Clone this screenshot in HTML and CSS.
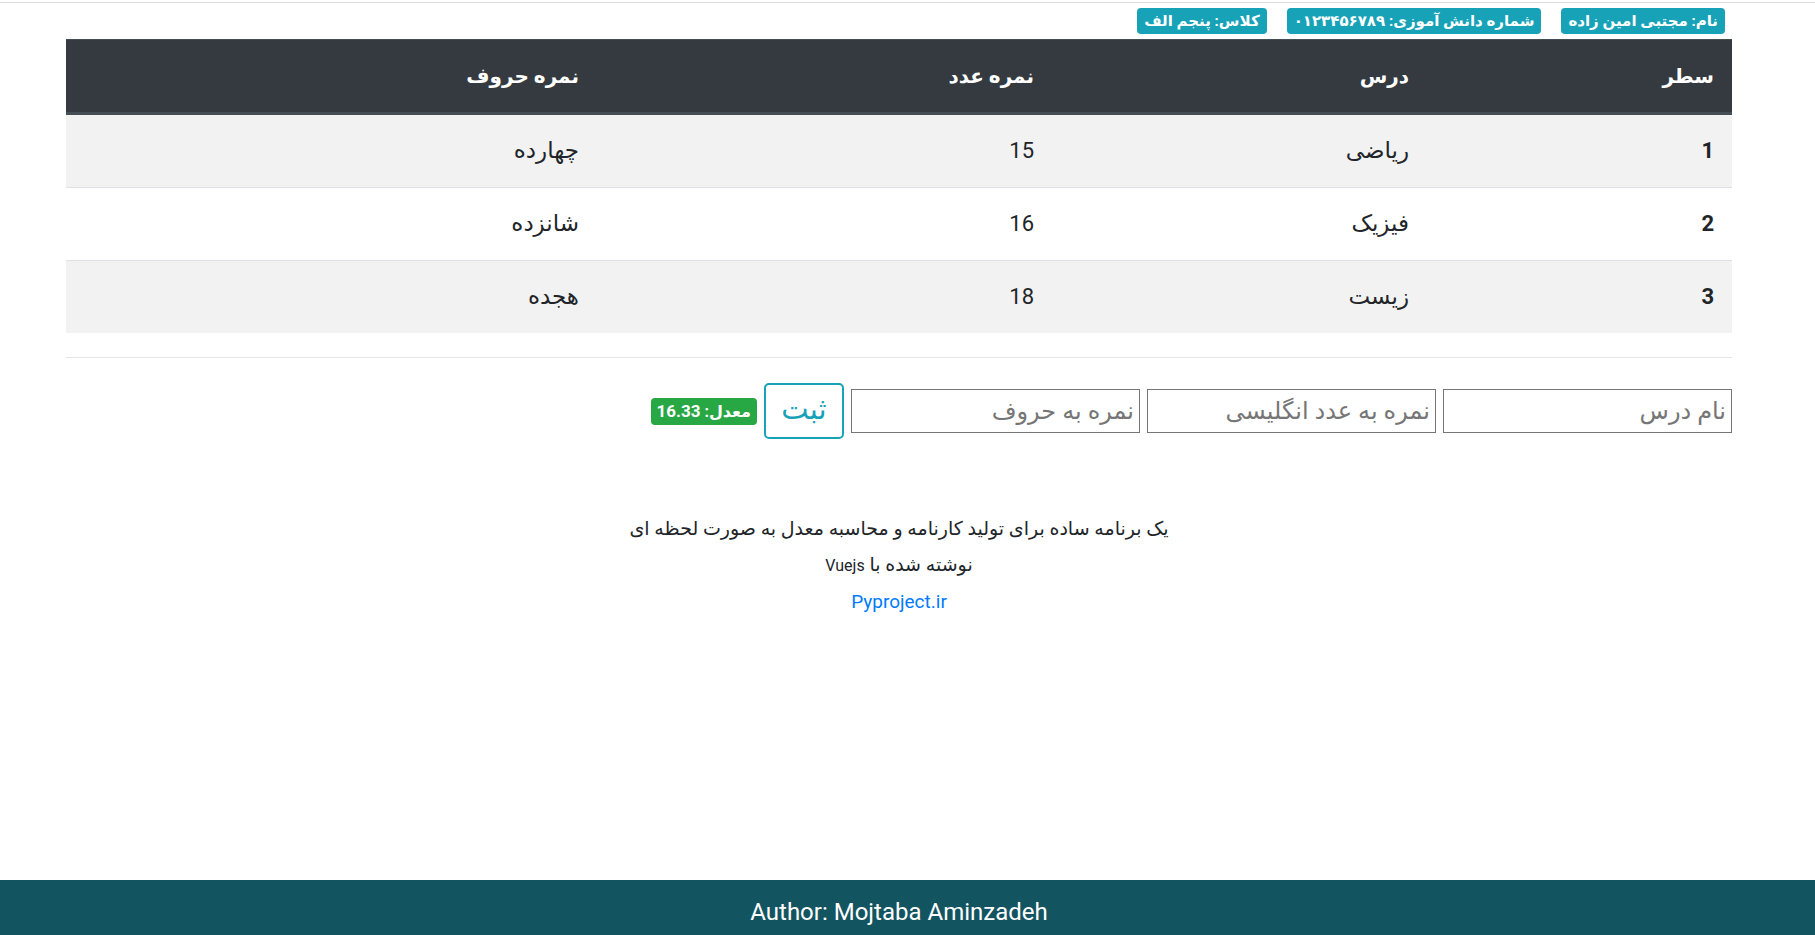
FILE: index.html
```html
<!DOCTYPE html>
<html lang="fa" dir="rtl">
<head>
<meta charset="utf-8">
<title>کارنامه</title>
<link rel="stylesheet" href="styles.css">
</head>
<body>
<div class="topline"></div>
<main class="wrap">
  <div class="info">
    <span class="badge badge-info">نام: مجتبی امین زاده</span>
    <span class="badge badge-info">شماره دانش آموزی: ۰۱۲۳۴۵۶۷۸۹</span>
    <span class="badge badge-info">کلاس: پنجم الف</span>
  </div>
  <table class="grades">
    <colgroup>
      <col class="col-row">
      <col class="col-lesson">
      <col class="col-num">
      <col class="col-letter">
    </colgroup>
    <thead>
      <tr><th>سطر</th><th>درس</th><th>نمره عدد</th><th>نمره حروف</th></tr>
    </thead>
    <tbody>
      <tr class="odd"><th class="num">1</th><td>ریاضی</td><td class="num">15</td><td>چهارده</td></tr>
      <tr><th class="num">2</th><td>فیزیک</td><td class="num">16</td><td>شانزده</td></tr>
      <tr class="odd"><th class="num">3</th><td>زیست</td><td class="num">18</td><td>هجده</td></tr>
    </tbody>
  </table>
  <hr class="sep">
  <form class="entry">
    <input class="field" type="text" placeholder="نام درس">
    <input class="field" type="text" placeholder="نمره به عدد انگلیسی">
    <input class="field" type="text" placeholder="نمره به حروف">
    <button class="btn-submit" type="button">ثبت</button>
    <span class="badge badge-success">معدل: <span class="avg">16.33</span></span>
  </form>
  <div class="about">
    <p>یک برنامه ساده برای تولید کارنامه و محاسبه معدل به صورت لحظه ای</p>
    <p>نوشته شده با <span class="lat">Vuejs</span></p>
    <p><a href="#">Pyproject.ir</a></p>
  </div>
</main>
<footer class="footer">Author: Mojtaba Aminzadeh</footer>
</body>
</html>
```
FILE: styles.css
```css
* { box-sizing: border-box; }
html, body { margin: 0; padding: 0; }
body {
  font-family: Roboto, "DejaVu Sans", sans-serif;
  color: #212529;
  background: #fff;
  min-height: 100vh;
  display: flex;
  flex-direction: column;
}
.topline {
  margin-top: 2px;
  border-top: 1px solid #dcdcdc;
  height: 0;
}
.wrap {
  padding: 0 83px 0 66px;
  flex: 1;
}
.info {
  display: flex;
  gap: 20px;
  padding: 5px 7px 0 0;
  height: 36px;
}
.badge {
  display: inline-block;
  font-weight: bold;
  color: #fff;
  border-radius: 4px;
  white-space: nowrap;
  font-family: Roboto, "DejaVu Sans", sans-serif;
}
.badge-info {
  background: #17a2b8;
  font-size: 15px;
  line-height: 26px;
  height: 26px;
  padding: 0 7px;
}
.badge-success {
  background: #28a745;
  font-size: 16px;
  line-height: 27px;
  height: 27px;
  padding: 0 6px;
}
.badge-success .avg { font-size: 17px; }
.grades {
  width: 100%;
  border-collapse: collapse;
  table-layout: fixed;
  margin: 0 0 24px;
  font-size: 23px;
}
.col-row { width: 305px; }
.col-lesson { width: 375px; }
.col-num { width: 455px; }
.grades th, .grades td {
  text-align: right;
  padding: 21px 18px;
  line-height: 30px;
  vertical-align: middle;
}
.grades thead th {
  background: #343a40;
  color: #fff;
  font-weight: bold;
  font-size: 20px;
  border-top: 1px solid #454d55;
  border-bottom: 3px solid #454d55;
}
.grades tbody th, .grades tbody td {
  border-top: 1px solid #dee2e6;
}
.grades tbody th { font-weight: bold; }
.grades tbody td { font-weight: normal; }
.grades .num { font-size: 22px; }
.grades tbody tr.odd { background: #f2f2f2; }
.sep {
  margin: 0;
  border: 0;
  border-top: 1px solid #e5e5e5;
}
.entry {
  display: flex;
  align-items: center;
  gap: 7px;
  margin-top: 25px;
}
.field {
  width: 289px;
  height: 44px;
  border: 1px solid #767676;
  border-radius: 0;
  padding: 0 5px;
  font-size: 24px;
  font-family: Roboto, "DejaVu Sans", sans-serif;
  color: #212529;
  background: #fff;
}
.field::placeholder { color: #767676; }
.btn-submit {
  width: 80px;
  height: 56px;
  border: 2px solid #17a2b8;
  border-radius: 5px;
  background: #fff;
  color: #17a2b8;
  font-size: 29px;
  line-height: 1;
  font-family: Roboto, "DejaVu Sans", sans-serif;
  padding: 0 0 4px;
}
.about {
  text-align: center;
  margin-top: 78px;
  font-size: 19px;
}
.about p {
  margin: 0 0 12px;
  line-height: 24px;
}
.about .lat { font-size: 16px; }
.about a {
  color: #007bff;
  text-decoration: none;
  font-size: 19px;
}
.footer {
  background: #135461;
  color: #fff;
  text-align: center;
  height: 55px;
  padding: 17px 17px 0 0;
  line-height: 30px;
  font-size: 24px;
  font-family: Roboto, "DejaVu Sans", sans-serif;
}
```
